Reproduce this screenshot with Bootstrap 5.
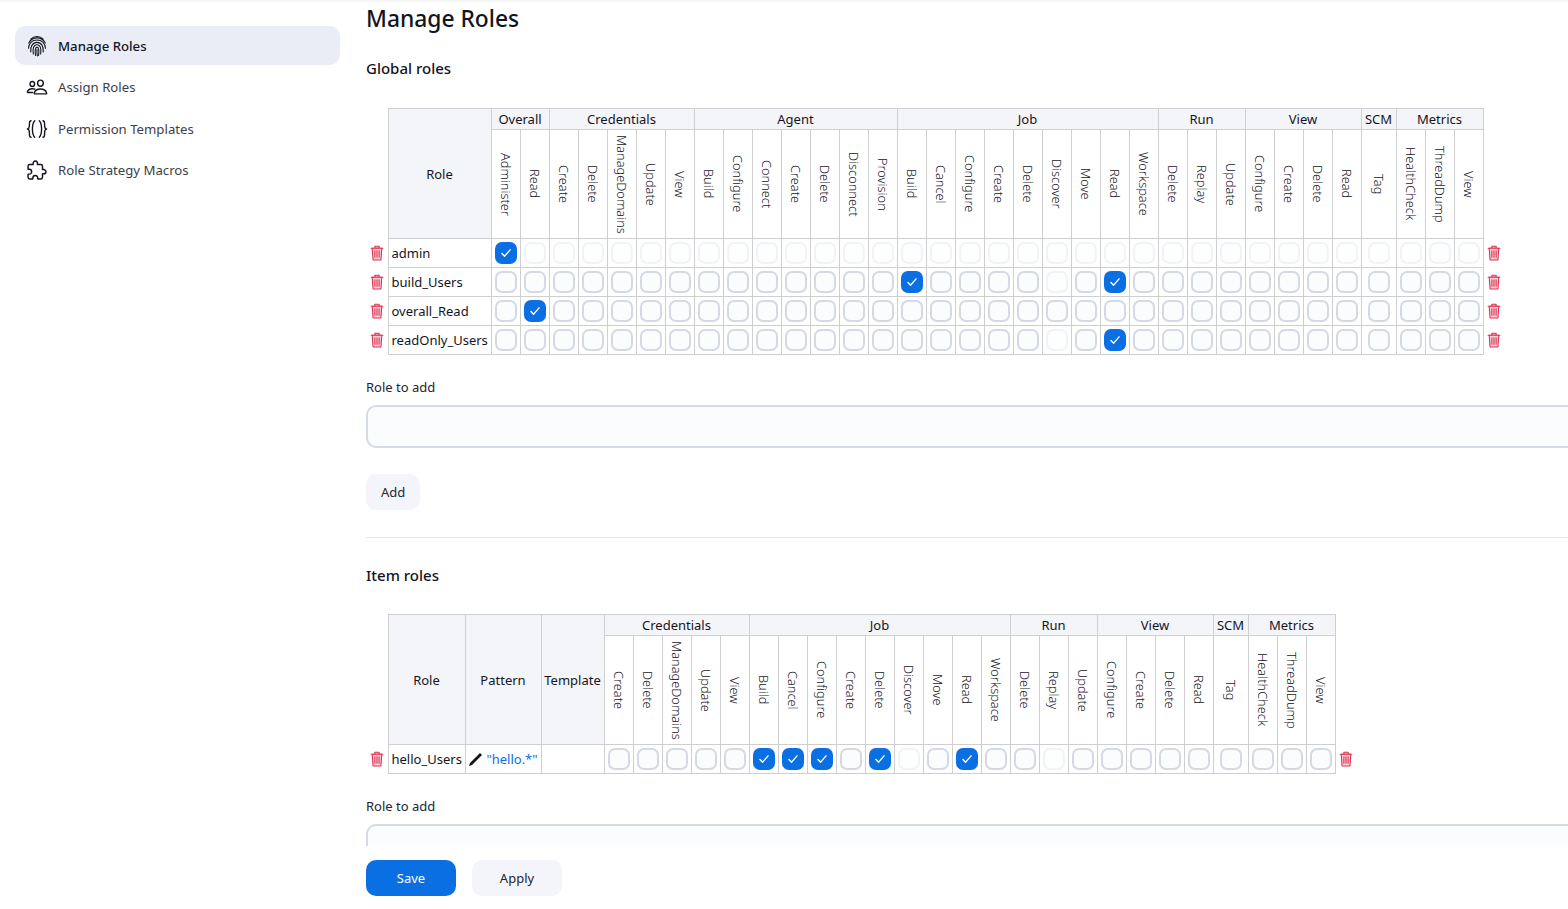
<!DOCTYPE html>
<html lang="en">
<head>
  <meta charset="UTF-8">
  <meta name="viewport" content="width=device-width, initial-scale=1.0">
  <title>Manage Roles</title>
  <link href="https://cdn.jsdelivr.net/npm/bootstrap@5.3.0/dist/css/bootstrap.min.css" rel="stylesheet">
  <style>
    html, body {
      height: 100%;
      overflow: hidden;
    }
    body {
      font-family: "Noto Sans", "Open Sans", sans-serif;
      font-size: 13px;
      color: #14141f;
      background: #fff;
      border-top: 2px solid #f6f6f6;
    }
    .side-col {
      flex: 0 0 366px;
      padding: 24px 26px 0 15px;
    }
    .side-link {
      height: 39px;
      padding-left: 11px;
      gap: 10px;
      margin-bottom: 2.6px;
      border-radius: 10px;
      color: #3c3e4c;
      font-size: 13.2px;
      text-decoration: none;
    }
    .side-link span {
      padding-top: 2px;
    }
    .side-link.is-active {
      background: #ebedf6;
      color: #14141f;
      font-weight: 500;
    }
    .side-link svg {
      width: 22px;
      height: 22px;
      flex: none;
      fill: none;
      stroke: #14141f;
      stroke-linecap: round;
      stroke-linejoin: round;
    }
    .main-col {
      flex: 0 0 1300px;
    }
    .page-title {
      font-size: 22.8px;
      font-weight: 500;
      line-height: 33px;
      margin: 0 0 21px;
    }
    .section-title {
      font-size: 15px;
      font-weight: 500;
      line-height: 24px;
      margin: 0 0 28px;
    }
    .item-title {
      margin-bottom: 27px;
    }
    .perm-table {
      width: auto;
      --bs-table-border-color: #cfcfd2;
      --bs-table-color: #14141f;
      margin: 0;
    }
    .perm-table > :not(caption) > * {
      border-width: 0;
    }
    .perm-table > :not(caption) > * > * {
      border-width: 1px;
    }
    .perm-table td, .perm-table th {
      padding: 0;
      font-weight: 400;
      text-align: center;
      vertical-align: middle;
    }
    .perm-table th {
      --bs-table-bg: #f4f5f8;
    }
    .perm-table th.rot-head {
      --bs-table-bg: #fff;
      height: 109px;
    }
    .perm-table .group-row th {
      height: 21px;
      line-height: 20px;
    }
    .perm-table td {
      height: 29px;
    }
    .perm-table td.role-name {
      text-align: left;
      padding: 2px 0 0 3px;
      white-space: nowrap;
    }
    .perm-table td.pattern-cell {
      padding-top: 2px;
      white-space: nowrap;
      color: #0b6fe4;
    }
    .perm-table td.del-cell, .perm-table th.del-cell {
      border-width: 0;
      --bs-table-bg: transparent;
    }
    .rot-text {
      display: inline-block;
      writing-mode: vertical-rl;
      white-space: nowrap;
      line-height: 20px;
      vertical-align: middle;
      font-size: 12.8px;
      font-weight: 300;
    }
    .del-icon {
      width: 14px;
      height: 16px;
      display: block;
      margin: 0 auto;
      fill: #fbcdd6;
      stroke: #dc3050;
      stroke-width: 1;
      stroke-linecap: round;
      stroke-linejoin: round;
    }
    .pen-icon {
      width: 15px;
      height: 15px;
      vertical-align: -3px;
      margin-right: 3px;
    }
    .perm-table .form-check-input {
      width: 22px;
      height: 22px;
      margin: 0;
      display: block;
      margin-inline: auto;
      border: 2px solid #d4d9e3;
      border-radius: 7px;
      background-color: #fbfcfe;
      opacity: 1;
    }
    .perm-table .form-check-input:checked {
      background-color: #0b6fe4;
      border-color: #0b6fe4;
      background-size: 18px;
      background-image: url("data:image/svg+xml,%3csvg xmlns='http://www.w3.org/2000/svg' viewBox='0 0 20 20'%3e%3cpath fill='none' stroke='%23fff' stroke-linecap='round' stroke-linejoin='round' stroke-width='1.6' d='m5.5 10.5 3 3 6-7'/%3e%3c/svg%3e");
    }
    .perm-table .form-check-input:disabled {
      opacity: .3;
    }
    .field-label {
      line-height: 20px;
      margin: 22px 0 8px;
      color: #23242e;
    }
    .role-input {
      height: 43px;
      border: 2px solid #d4dbe6;
      border-radius: 10px;
      background: #fbfcfe;
    }
    .soft-btn {
      height: 36px;
      padding: 2px 15px 0;
      border: 0;
      border-radius: 10px;
      background: #f4f5fa;
      color: #23242e;
      font-size: 13px;
      margin-top: 26px;
    }
    .sep-line {
      margin: 27px 0 25px;
      border: 0;
      border-top: 1px solid #e8e8ea;
      opacity: 1;
    }
    .bottom-bar {
      position: absolute;
      left: 0;
      right: 0;
      bottom: 0;
      height: 63px;
      padding: 14px 0 0 366px;
      background: #fff;
    }
    .bottom-bar .btn {
      width: 90px;
      height: 36px;
      padding: 2px 0 0;
      border: 0;
      border-radius: 10px;
      font-size: 13px;
    }
    .save-btn {
      background: #0b6fe4;
      color: #fff;
    }
    .apply-btn {
      background: #f4f5fa;
      color: #23242e;
    }
  </style>
</head>
<body>
  <div class="d-flex">
    <aside class="side-col">
      <a href="#" class="side-link is-active d-flex align-items-center">
        <svg viewBox="0 0 24 24" stroke-width="1.2">
          <path d="M5.2 4.400A9.600 9.600 0 0 1 18.800 4.400"/>
          <path d="M3 8.800A10 10 0 0 1 21 8.800"/>
          <path d="M2.800 14.500C2.800 9 6.600 5.500 12 5.500S21.200 9 21.200 14.500"/>
          <path d="M5.200 18.500C4.400 12.500 7.400 8 12 8s7.600 4.500 6.800 10.500"/>
          <path d="M8 20.800C6.800 15 8.400 10.600 12 10.600S17 15 16 20.800"/>
          <path d="M10.400 22.400C9.600 17.500 10 13.200 12 13.200s2.400 4 1.700 9"/>
          <path d="M12 15.800c-.2 2.400 0 4.800.4 7"/>
        </svg>
        <span>Manage Roles</span>
      </a>
      <a href="#" class="side-link d-flex align-items-center">
        <svg viewBox="0 0 512 512" stroke-width="34">
          <path d="M402 168c-2.93 40.67-33.1 72-66 72s-63.12-31.32-66-72c-3-42.31 26.37-72 66-72s69 30.46 66 72z"/>
          <path d="M336 304c-65.17 0-127.84 32.37-143.54 95.41-2.08 8.34 3.15 16.59 11.72 16.59h263.65c8.57 0 13.77-8.25 11.72-16.59C463.85 335.36 401.18 304 336 304z"/>
          <path d="M200 185.94c-2.34 32.48-26.72 58.06-53 58.06s-50.7-25.57-53-58.06C91.61 152.15 115.34 128 147 128s55.39 24.77 53 57.94z"/>
          <path d="M206 306c-18.05-8.27-37.93-11.45-59-11.45-52 0-102.1 25.85-114.65 76.2-1.65 6.66 2.53 13.25 9.37 13.25H154"/>
        </svg>
        <span>Assign Roles</span>
      </a>
      <a href="#" class="side-link d-flex align-items-center">
        <svg viewBox="0 0 24 24" stroke-width="1.5">
          <path d="M5.5 3C3 3 4 6 3.6 9.400 3.400 11 2.600 11.800 1.600 12c1 .2 1.800 1 2 2.600C4 18 3 21 5.500 21"/>
          <path d="M9.500 3C7 5.500 7 9 7 12s0 6.500 2.500 9"/>
          <path d="M14.500 3C17 5.500 17 9 17 12s0 6.500-2.500 9"/>
          <path d="M18.500 3C21 3 20 6 20.400 9.400c.2 1.600 1 2.400 2 2.600-1 .2-1.800 1-2 2.600C20 18 21 21 18.500 21"/>
        </svg>
        <span>Permission Templates</span>
      </a>
      <a href="#" class="side-link d-flex align-items-center">
        <svg viewBox="0 0 512 512" stroke-width="34">
          <path d="M413.66 246.1H386a2 2 0 01-2-2v-77.24A38.86 38.86 0 00345.14 128H267.9a2 2 0 01-2-2V98.34c0-27.14-21.5-49.86-48.64-50.33a49.53 49.53 0 00-50.4 49.51V126a2 2 0 01-2 2H87.62A39.74 39.74 0 0048 167.62V238a2 2 0 002 2h26.91c29.37 0 53.68 25.48 54.09 54.85.42 29.87-23.51 57.15-53.29 57.15H50a2 2 0 00-2 2v70.38A39.74 39.74 0 0087.62 464H158a2 2 0 002-2v-20.93c0-30.28 24.75-56.35 55-57.06 30.1-.7 57 20.31 57 50.28V462a2 2 0 002 2h71.14A38.86 38.86 0 00384 425.14v-78a2 2 0 012-2h28.48c27.63 0 49.52-22.67 49.52-50.4s-23.2-48.64-50.34-48.64z"/>
        </svg>
        <span>Role Strategy Macros</span>
      </a>
    </aside>

    <main class="main-col">
      <h1 class="page-title">Manage Roles</h1>

      <h2 class="section-title">Global roles</h2>
      <div id="tablaGlobal"></div>
      <div class="field-label">Role to add</div>
      <div class="role-input"></div>
      <button class="soft-btn">Add</button>
      <hr class="sep-line">

      <h2 class="section-title item-title">Item roles</h2>
      <div id="tablaItem"></div>
      <div class="field-label">Role to add</div>
      <div class="role-input"></div>
    </main>
  </div>

  <div class="bottom-bar d-flex gap-3">
    <button class="btn save-btn">Save</button>
    <button class="btn apply-btn">Apply</button>
  </div>

  <script>
    const grupos = {
      Overall: ["Administer", "Read"],
      Credentials: ["Create", "Delete", "ManageDomains", "Update", "View"],
      Agent: ["Build", "Configure", "Connect", "Create", "Delete", "Disconnect", "Provision"],
      Job: ["Build", "Cancel", "Configure", "Create", "Delete", "Discover", "Move", "Read", "Workspace"],
      Run: ["Delete", "Replay", "Update"],
      View: ["Configure", "Create", "Delete", "Read"],
      SCM: ["Tag"],
      Metrics: ["HealthCheck", "ThreadDump", "View"]
    };

    const iconoBorrar = `<svg class="del-icon" viewBox="0 0 13 15"><path d="M1 3h11M4.5 3V1.2h4V3"/><path d="M2 3l.8 11h7.4L11 3z"/><path d="M4.5 5.5v6M6.5 5.5v6M8.5 5.5v6"/></svg>`;
    const iconoLapiz = `<svg class="pen-icon" viewBox="0 0 15 15"><path d="M1 14l1-3L12 1l2 2L4 13z" fill="#14141f"/></svg>`;

    function casilla(clave, fila) {
      const marcada = fila.marcadas.includes(clave) ? "checked" : "";
      const apagada = fila.todoApagado && !marcada || (fila.apagadas || []).includes(clave) ? "disabled" : "";
      return `<td><input class="form-check-input" type="checkbox" ${marcada} ${apagada}></td>`;
    }

    function crearTabla(id, nombresGrupos, cabeceras, filas) {
      const columnas = nombresGrupos.flatMap(g => grupos[g].map(p => ({ grupo: g, permiso: p })));
      let html = `<table class="table table-bordered align-middle perm-table"><colgroup><col style="width:22px">`;
      cabeceras.forEach(c => html += `<col style="width:${c.ancho}px">`);
      columnas.forEach(c => html += `<col style="width:${c.grupo === "SCM" ? 35 : 29}px">`);
      html += `<col style="width:22px"></colgroup><thead><tr class="group-row"><th class="del-cell" rowspan="2"></th>`;
      cabeceras.forEach(c => html += `<th rowspan="2">${c.texto}</th>`);
      nombresGrupos.forEach(g => html += `<th colspan="${grupos[g].length}">${g}</th>`);
      html += `<th class="del-cell" rowspan="2"></th></tr><tr>`;
      columnas.forEach(c => html += `<th class="rot-head"><span class="rot-text">${c.permiso}</span></th>`);
      html += `</tr></thead><tbody>`;
      filas.forEach(f => {
        html += `<tr><td class="del-cell">${iconoBorrar}</td><td class="role-name">${f.nombre}</td>`;
        if (f.patron) html += `<td class="pattern-cell">${iconoLapiz}${f.patron}</td><td></td>`;
        columnas.forEach(c => html += casilla(`${c.grupo}/${c.permiso}`, f));
        html += `<td class="del-cell">${iconoBorrar}</td></tr>`;
      });
      html += `</tbody></table>`;
      document.getElementById(id).innerHTML = html;
    }

    crearTabla("tablaGlobal", Object.keys(grupos), [{ texto: "Role", ancho: 103 }], [
      { nombre: "admin", marcadas: ["Overall/Administer"], todoApagado: true },
      { nombre: "build_Users", marcadas: ["Job/Build", "Job/Read"], apagadas: ["Job/Discover"] },
      { nombre: "overall_Read", marcadas: ["Overall/Read"] },
      { nombre: "readOnly_Users", marcadas: ["Job/Read"], apagadas: ["Job/Discover"] }
    ]);

    crearTabla("tablaItem", Object.keys(grupos).filter(g => g !== "Overall" && g !== "Agent"),
      [{ texto: "Role", ancho: 77 }, { texto: "Pattern", ancho: 76 }, { texto: "Template", ancho: 63 }], [
      { nombre: "hello_Users", patron: "\"hello.*\"", marcadas: ["Job/Build", "Job/Cancel", "Job/Configure", "Job/Delete", "Job/Read"], apagadas: ["Job/Discover", "Run/Replay"] }
    ]);
  </script>
  <script src="https://cdn.jsdelivr.net/npm/bootstrap@5.3.0/dist/js/bootstrap.bundle.min.js"></script>
</body>
</html>
